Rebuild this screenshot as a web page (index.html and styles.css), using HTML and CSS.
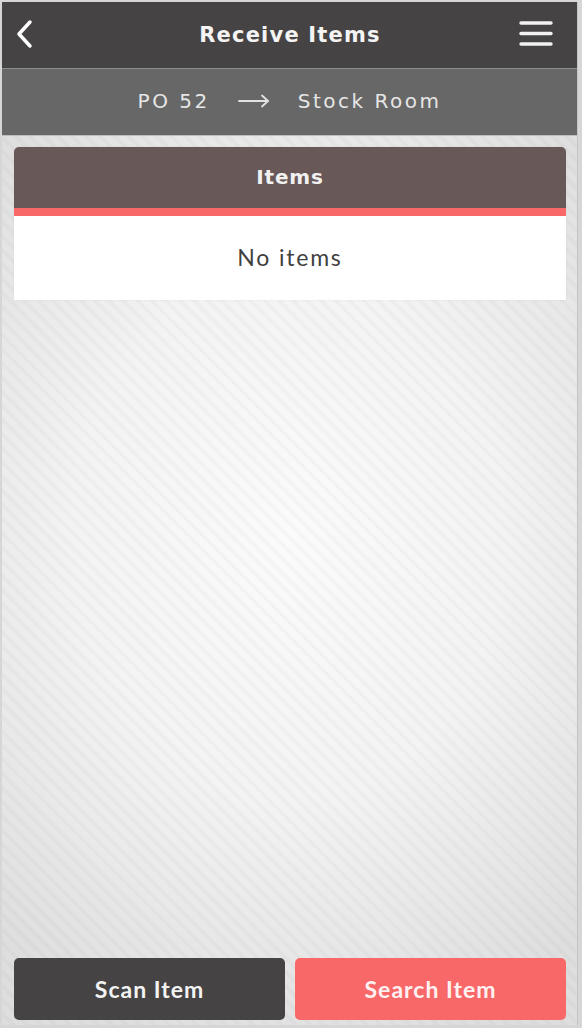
FILE: index.html
```html
<!DOCTYPE html>
<html>
<head>
<meta charset="utf-8">
<link rel="stylesheet" href="styles.css">
</head>
<body>
<div class="app">
  <header class="topbar">
    <svg class="back" width="20" height="30" viewBox="0 0 20 30"><path d="M15 3 L4 15 L15 27" fill="none" stroke="#fff" stroke-width="3.5" stroke-linecap="round" stroke-linejoin="round"/></svg>
    <h1 class="title">Receive Items</h1>
    <svg class="menu" width="34" height="28" viewBox="0 0 34 28"><g stroke="#f2f2f2" stroke-width="3.4" stroke-linecap="round"><line x1="2" y1="3" x2="32" y2="3"/><line x1="2" y1="13.5" x2="32" y2="13.5"/><line x1="2" y1="24" x2="32" y2="24"/></g></svg>
  </header>
  <div class="route">
    <span class="place">PO 52</span>
    <svg class="arrow" width="32" height="14" viewBox="0 0 32 14"><g fill="none" stroke="#e2e2e2" stroke-width="1.8" stroke-linecap="round" stroke-linejoin="round"><line x1="1" y1="7" x2="30" y2="7"/><path d="M24 1.5 L30 7 L24 12.5"/></g></svg>
    <span class="place">Stock Room</span>
  </div>
  <main class="content">
    <section class="card">
      <div class="card-head">Items</div>
      <div class="card-body">No items</div>
    </section>
    <div class="actions">
      <button class="btn btn-dark">Scan Item</button>
      <button class="btn btn-red">Search Item</button>
    </div>
  </main>
</div>
</body>
</html>
```
FILE: styles.css
```css
html, body {
  margin: 0;
  padding: 0;
}
body {
  width: 582px;
  height: 1028px;
  background: #d6d6d6;
  overflow: hidden;
}
.app {
  margin: 2px 0 0 2px;
  width: 575px;
  height: 1023px;
  display: flex;
  flex-direction: column;
  box-shadow: 1px 0 0 #c4c4c4;
}
.topbar {
  height: 66px;
  background: #454343;
  display: grid;
  grid-template-columns: 1fr auto 1fr;
  align-items: center;
  padding: 0 24px 0 13px;
  border-bottom: 1px solid #8c8c8c;
}
.back { display: block; margin-top: -2px; justify-self: start; }
.menu { display: block; margin-top: -2px; justify-self: end; }
.title {
  margin: 0 0 0 12px;
  font-family: "DejaVu Sans", sans-serif;
  font-weight: bold;
  font-size: 21px;
  color: #f4f4f4;
  letter-spacing: 1.2px;
}
.route {
  height: 67px;
  background: #676767;
  border-bottom: 1px solid #bdbdbd;
  display: flex;
  align-items: center;
  justify-content: center;
  gap: 28px;
  font-family: "DejaVu Sans", sans-serif;
  font-size: 20px;
  color: #e6e6e6;
  padding: 0 0 3px 0;
  box-sizing: border-box;
}
.place { letter-spacing: 2.5px; }
.arrow { display: block; margin-top: 1px; }
.content {
  flex: 1;
  display: flex;
  flex-direction: column;
  justify-content: space-between;
  padding: 11px 11px 5px 12px;
  background:
    repeating-linear-gradient(45deg, rgba(0,0,0,0) 0px, rgba(0,0,0,0) 6px, rgba(0,0,0,0.022) 6px, rgba(0,0,0,0.022) 10px),
    radial-gradient(ellipse 75% 60% at 50% 45%, #fbfbfb 0%, #f3f3f3 50%, #dedede 100%);
}
.card {
  border-radius: 5px 5px 0 0;
  overflow: hidden;
  box-shadow: 0 0 2px rgba(0,0,0,0.08);
}
.card-head {
  height: 69px;
  background: #685857;
  border-bottom: 8px solid #f96868;
  display: flex;
  align-items: center;
  justify-content: center;
  font-family: "DejaVu Sans", sans-serif;
  font-weight: bold;
  font-size: 20px;
  letter-spacing: 0.8px;
  color: #f1f1f1;
  padding-bottom: 2px;
  box-sizing: border-box;
}
.card-body {
  height: 84px;
  background: #fff;
  display: flex;
  align-items: center;
  justify-content: center;
  font-family: "Lato", sans-serif;
  font-size: 23px;
  letter-spacing: 1.8px;
  color: #3f3f3f;
  padding-bottom: 3px;
  box-sizing: border-box;
}
.actions {
  display: flex;
  gap: 10px;
}
.btn {
  flex: 1;
  height: 62px;
  border: none;
  border-radius: 5px;
  font-family: "Lato", sans-serif;
  font-weight: bold;
  font-size: 23px;
  letter-spacing: 1px;
  color: #f3f3f3;
  padding: 0;
}
.btn-dark { background: #454343; }
.btn-red { background: #f96868; color: #fff1f1; }
```
